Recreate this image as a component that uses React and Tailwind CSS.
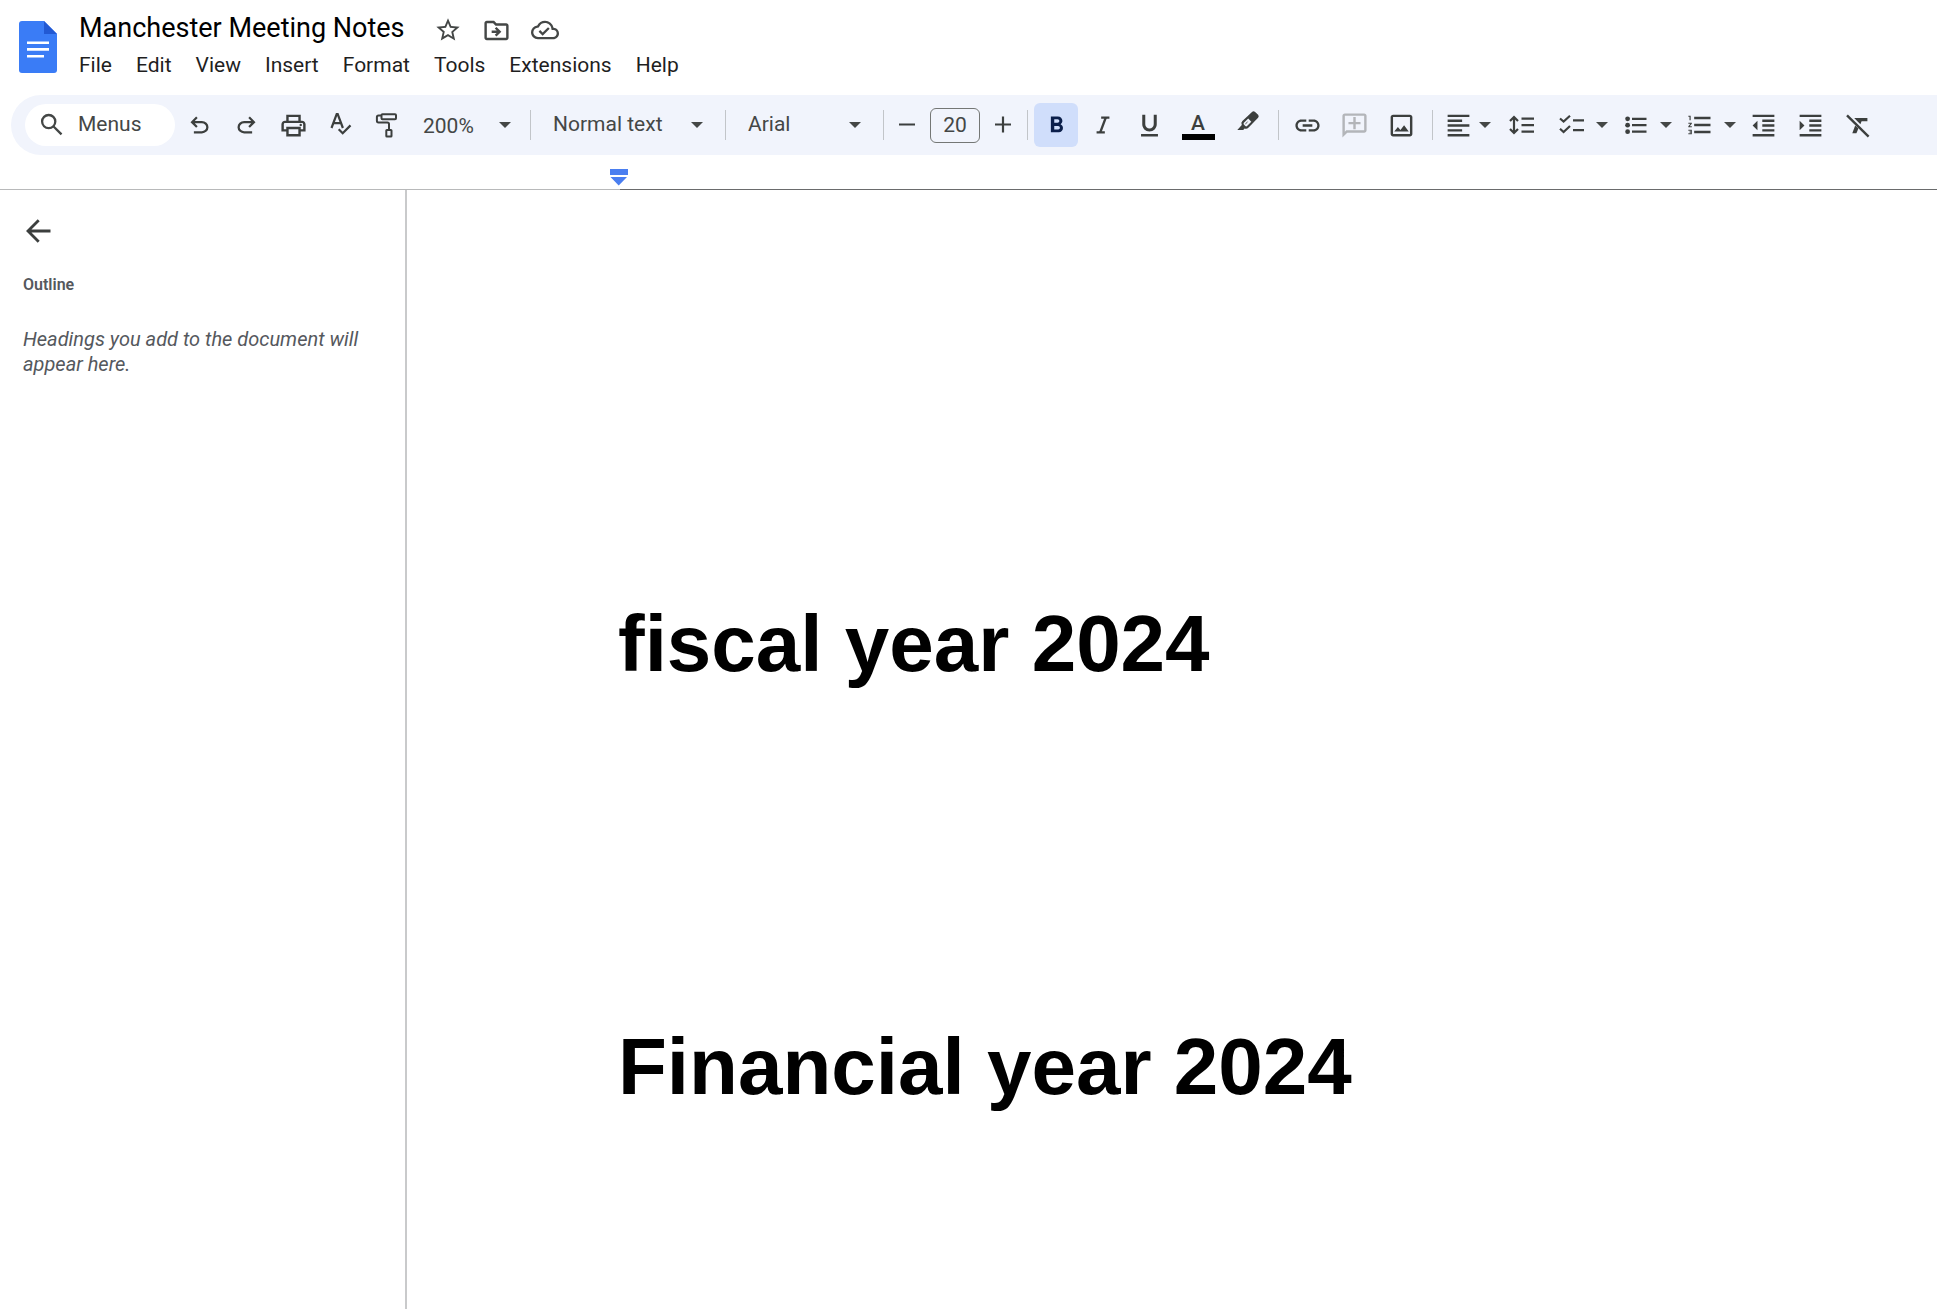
import React from "react";
import {
  MdStarBorder,
  MdOutlineDriveFileMove,
  MdOutlineCloudDone,
  MdOutlinePrint,
  MdFormatBold,
  MdFormatUnderlined,
  MdLink,
  MdOutlineAddComment,
  MdOutlineImage,
  MdFormatAlignLeft,
  MdFormatListNumbered,
  MdFormatIndentDecrease,
  MdFormatIndentIncrease,
} from "react-icons/md";
import { Italic } from "lucide-react";

const MENUS = ["File", "Edit", "View", "Insert", "Format", "Tools", "Extensions", "Help"];

function Stroke({ children, width = 2 }) {
  return (
    <svg
      viewBox="0 0 30 30"
      className="size-[30px] shrink-0"
      fill="none"
      stroke="currentColor"
      strokeWidth={width}
      aria-hidden="true"
    >
      {children}
    </svg>
  );
}

function DocsLogo() {
  return (
    <svg viewBox="0 0 38 52" className="h-[52px] w-[38px]" aria-hidden="true">
      <path d="M3 0H25L38 13V49a3 3 0 0 1-3 3H3a3 3 0 0 1-3-3V3a3 3 0 0 1 3-3Z" fill="#3a7cf6" />
      <path d="M25 0 38 13H25Z" fill="#2259d3" />
      <path d="M8 21.7H30M8 28.4H30M8 35.2H25" stroke="#fff" strokeWidth="2.6" />
    </svg>
  );
}

function UndoIcon() {
  return (
    <svg viewBox="0 0 24 24" className="size-[27px]" fill="currentColor" aria-hidden="true">
      <path d="M7 19v-2h7.1q1.575 0 2.737-1T18 13.5q0-1.5-1.163-2.5T14.1 10H7.8l2.6 2.6L9 14 4 9l5-5 1.4 1.4L7.8 8h6.3q2.425 0 4.163 1.575T20 13.5t-1.737 3.925T14.1 19z" />
    </svg>
  );
}

function SpellIcon() {
  return (
    <Stroke width={2.2}>
      <path d="M5.5 18 10.7 4.1H11.7L16.9 18M7.3 13.1H15.1" />
      <path d="M12.7 19.2 16.7 23.2 24.5 15.4" />
    </Stroke>
  );
}

function PaintIcon() {
  return (
    <Stroke>
      <rect x="8.5" y="4.2" width="14.5" height="5" rx="1" />
      <path d="M8.5 5.5H5.5Q3.9 5.5 3.9 7.1V10.8Q3.9 12.4 5.5 12.4H14.4Q16 12.4 16 14V19.5" />
      <rect x="13.3" y="20" width="5.2" height="6.6" rx="0.6" />
    </Stroke>
  );
}

function PenIcon() {
  return (
    <svg viewBox="0 0 30 30" className="size-[30px]" aria-hidden="true">
      <path
        d="M4.3 20 8.8 15Q7.6 12.7 9.4 11L19 1.9Q20.6.5 22.1 1.9L25.1 4.8Q26.4 6.2 25.1 7.7L15.6 17.6Q13.6 19.5 11.6 18.4L10.2 20Z"
        fill="currentColor"
      />
      <path d="M10.9 12.7 15.2 8.6 18.3 11.7 14.1 16Q13.2 16.8 12.3 16L10.9 14.6Q10.1 13.6 10.9 12.7Z" fill="#f1f4fc" />
      <path d="M12.3 14.3 14.6 11.6" stroke="currentColor" strokeWidth="0.8" />
    </svg>
  );
}

function SpacingIcon() {
  return (
    <Stroke width={2.2}>
      <path d="M7 7V23M3 11 7 7 11 11M3 19 7 23 11 19" />
      <path d="M14.5 8.7H27M14.5 15.2H27M14.5 21.7H27" />
    </Stroke>
  );
}

function ChecklistIcon() {
  return (
    <Stroke width={2.2}>
      <path d="M3 8.5 6.6 11.5 13 5.8M3 18.7 6.6 22 13 16" />
      <path d="M16 10.4H27M16 20.1H27" />
    </Stroke>
  );
}

function BulletsIcon() {
  return (
    <Stroke width={2.2}>
      <path d="M11 8.8H25.5M11 15.2H25.5M11 21.7H25.5" />
      <g fill="currentColor" stroke="none">
        <circle cx="6.6" cy="8.8" r="2.4" />
        <circle cx="6.6" cy="15.2" r="2.4" />
        <circle cx="6.6" cy="21.7" r="2.4" />
      </g>
    </Stroke>
  );
}

function ClearIcon() {
  return (
    <svg viewBox="0 0 30 30" className="size-[30px]" fill="currentColor" aria-hidden="true">
      <path d="M11.2 8H24.4V11.3H18.6L17.4 14.3 14.6 11.4Z" />
      <path d="M12.2 15.5 15.4 18.6 13.4 23.3H9.3Z" />
      <path d="M4 5.4 25.6 26.6" stroke="currentColor" strokeWidth="2.4" />
    </svg>
  );
}

function Caret({ className = "" }) {
  return (
    <svg viewBox="0 0 12 6" className={"h-[6px] w-[12px] shrink-0 " + className} aria-hidden="true">
      <path d="M0 0H12L6 6Z" fill="#444746" />
    </svg>
  );
}

function Tool({ label, children, className = "w-[47px]" }) {
  return (
    <button
      type="button"
      aria-label={label}
      className={"flex h-11 shrink-0 items-center justify-center text-[#3c3f3e] " + className}
    >
      {children}
    </button>
  );
}

function MenuTool({ label, children, className }) {
  return (
    <button
      type="button"
      aria-label={label}
      className={"flex h-11 shrink-0 items-center pl-[7px] text-[#3c3f3e] " + className}
    >
      <span className="flex size-[30px] items-center justify-center">{children}</span>
      <Caret />
    </button>
  );
}

function Divider({ className = "" }) {
  return <div className={"h-[30px] w-px shrink-0 bg-[#c2c5c9] " + className} />;
}

function Picker({ label, value, className, selectClass, caretClass }) {
  return (
    <div className={"relative flex h-11 shrink-0 items-center " + className}>
      <select
        aria-label={label}
        defaultValue={value}
        className={"h-full w-full appearance-none bg-transparent text-[21px] text-[#444746] outline-none " + selectClass}
      >
        <option>{value}</option>
      </select>
      <Caret className={"pointer-events-none absolute " + caretClass} />
    </div>
  );
}

function Toolbar() {
  return (
    <div
      role="toolbar"
      className="ml-[11px] flex h-[60px] items-center overflow-hidden rounded-l-full bg-[#f1f4fc] pl-[14px]"
    >
      <button
        type="button"
        className="mr-px flex h-[42px] w-[150px] shrink-0 items-center gap-[11px] rounded-full bg-white pl-3 text-[21px] text-[#444746]"
      >
        <Stroke width={2.3}>
          <circle cx="11.7" cy="11.6" r="6.6" />
          <path d="M16.3 16.2 24.5 24.4" />
        </Stroke>
        Menus
      </button>
      <Tool label="Undo">
        <UndoIcon />
      </Tool>
      <Tool label="Redo">
        <span className="-scale-x-100">
          <UndoIcon />
        </span>
      </Tool>
      <Tool label="Print">
        <MdOutlinePrint className="size-[29px]" />
      </Tool>
      <Tool label="Spelling and grammar check">
        <SpellIcon />
      </Tool>
      <Tool label="Paint format">
        <PaintIcon />
      </Tool>
      <Picker label="Zoom" value="200%" className="w-[119px]" selectClass="pl-3 pt-[3px]" caretClass="right-[19px]" />
      <Divider />
      <Picker label="Styles" value="Normal text" className="w-[194px]" selectClass="pl-[22px]" caretClass="right-[22px]" />
      <Divider />
      <Picker label="Font" value="Arial" className="w-[157px]" selectClass="pl-[22px]" caretClass="right-[22px]" />
      <Divider />
      <Tool label="Decrease font size" className="w-[46px]">
        <Stroke width={2.2}>
          <path d="M7 14.5H23" />
        </Stroke>
      </Tool>
      <input
        aria-label="Font size"
        defaultValue="20"
        className="h-[35px] w-[50px] shrink-0 rounded-md border border-[#747775] bg-transparent text-center text-[21px] text-[#444746] outline-none"
      />
      <Tool label="Increase font size" className="w-[45px]">
        <Stroke width={2.2}>
          <path d="M7 14.5H23M15 6.5V22.5" />
        </Stroke>
      </Tool>
      <Divider className="ml-[2px]" />
      <button
        type="button"
        aria-label="Bold"
        aria-pressed="true"
        className="mr-[2px] ml-[6px] flex size-11 shrink-0 items-center justify-center rounded-md bg-[#d0defb] text-[#0b1f4b]"
      >
        <MdFormatBold className="size-[27px]" />
      </button>
      <Tool label="Italic" className="w-[46px]">
        <Italic className="size-[22px]" strokeWidth={2.6} strokeLinecap="butt" />
      </Tool>
      <Tool label="Underline">
        <MdFormatUnderlined className="size-[29px]" />
      </Tool>
      <Tool label="Text color" className="w-[50px] flex-col pt-px">
        <span className="text-[21px] leading-[22px] font-medium">A</span>
        <span className="h-[6px] w-[33px] bg-black" />
      </Tool>
      <Tool label="Highlight color" className="w-[50px]">
        <PenIcon />
      </Tool>
      <Divider className="mx-[5px]" />
      <Tool label="Insert link">
        <MdLink className="size-[29px]" />
      </Tool>
      <button
        type="button"
        disabled
        aria-label="Add comment"
        className="flex h-11 w-[47px] shrink-0 items-center justify-center text-[#b3b5b9]"
      >
        <MdOutlineAddComment className="size-[29px] -scale-x-100" />
      </button>
      <Tool label="Insert image">
        <MdOutlineImage className="size-[29px]" />
      </Tool>
      <Divider className="mr-[3px] ml-[7px]" />
      <MenuTool label="Align" className="w-[62px] gap-[6px]">
        <MdFormatAlignLeft className="size-[29px]" />
      </MenuTool>
      <Tool label="Line spacing">
        <SpacingIcon />
      </Tool>
      <MenuTool label="Checklist" className="ml-[5px] w-16 gap-[9px]">
        <ChecklistIcon />
      </MenuTool>
      <MenuTool label="Bulleted list" className="w-16 gap-[9px]">
        <BulletsIcon />
      </MenuTool>
      <MenuTool label="Numbered list" className="w-[62px] gap-[9px]">
        <MdFormatListNumbered className="size-[28px]" />
      </MenuTool>
      <Tool label="Decrease indent">
        <MdFormatIndentDecrease className="size-[29px]" />
      </Tool>
      <Tool label="Increase indent">
        <MdFormatIndentIncrease className="size-[29px]" />
      </Tool>
      <Tool label="Clear formatting">
        <ClearIcon />
      </Tool>
    </div>
  );
}

function Header() {
  return (
    <header className="flex h-[95px] gap-[22px] pl-[19px]">
      <div className="pt-[21px]">
        <DocsLogo />
      </div>
      <div className="pt-2">
        <div className="flex items-center text-[#444746]">
          <input
            aria-label="Document title"
            defaultValue="Manchester Meeting Notes"
            className="h-10 w-[355px] bg-transparent text-[27px] text-black outline-none"
          />
          <div className="flex items-center gap-5 pt-1">
            <button type="button" aria-label="Star">
              <MdStarBorder className="size-7" />
            </button>
            <button type="button" aria-label="Move">
              <MdOutlineDriveFileMove className="size-[29px]" />
            </button>
            <button type="button" aria-label="Document status">
              <MdOutlineCloudDone className="size-7" />
            </button>
          </div>
        </div>
        <nav className="flex gap-6 pt-px">
          {MENUS.map((name) => (
            <button key={name} type="button" className="text-[21px] leading-8 text-[#1f1f1f]">
              {name}
            </button>
          ))}
        </nav>
      </div>
    </header>
  );
}

function Ruler() {
  return (
    <div className="flex h-[35px] flex-col justify-end">
      <svg viewBox="0 0 18 18" className="mb-[2px] ml-[610px] size-[18px]" fill="#4a7ef0" aria-hidden="true">
        <path d="M0 0H18V6H0ZM.5 8H17L8.7 16.6Z" />
      </svg>
      <div className="flex h-px">
        <div className="w-[620px] bg-[#b8b9ba]" />
        <div className="flex-1 bg-[#6a6b6c]" />
      </div>
    </div>
  );
}

function Outline() {
  return (
    <aside className="w-[407px] shrink-0 border-r-2 border-[#c9cacb] px-[23px] pt-[26px] text-[#55585d]">
      <button type="button" aria-label="Close outline" className="block text-[#3c3f3e]">
        <Stroke width={2.8}>
          <path d="M27.5 15H5.5M15.7 4.3 5 15 15.7 25.7" />
        </Stroke>
      </button>
      <h2 className="mt-[27px] text-base leading-6 font-semibold">Outline</h2>
      <p className="mt-[30px] text-[20px] leading-[25px] italic">Headings you add to the document will appear here.</p>
    </aside>
  );
}

export default function App() {
  return (
    <div className="flex min-h-screen flex-col bg-white font-['Roboto',sans-serif]">
      <Header />
      <Toolbar />
      <Ruler />
      <div className="flex flex-1">
        <Outline />
        <main className="flex-1 pt-[401px] pl-[211px] font-['Liberation_Sans',Arial,sans-serif] text-[80px] leading-[106px] font-bold text-black">
          <p>fiscal year 2024</p>
          <p className="mt-[317px]">Financial year 2024</p>
        </main>
      </div>
    </div>
  );
}
